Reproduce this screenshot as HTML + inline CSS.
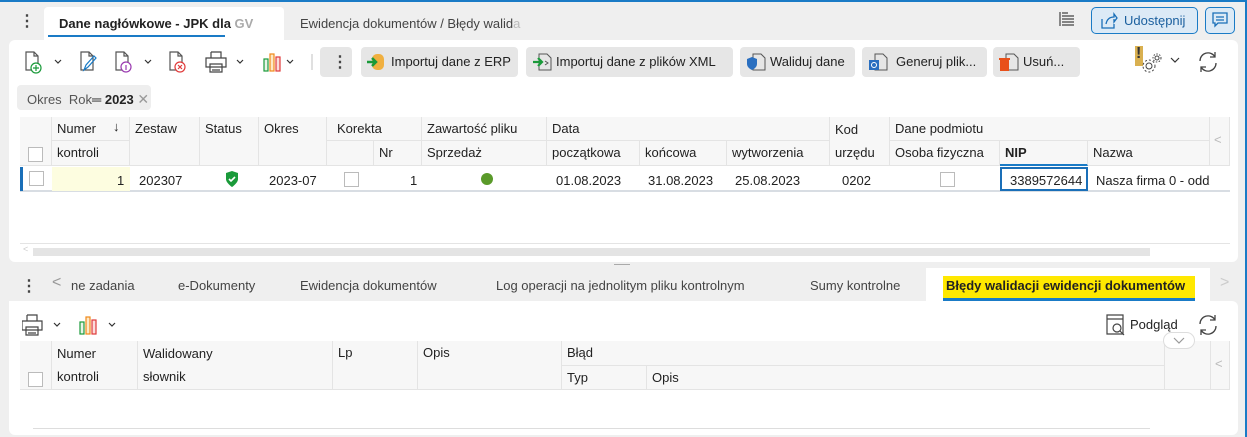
<!DOCTYPE html>
<html><head><meta charset="utf-8"><style>
*{box-sizing:border-box;margin:0;padding:0}
body{width:1247px;height:437px;overflow:hidden;background:#efefef;font-family:"Liberation Sans",sans-serif;font-size:13px;color:#222;position:relative}
.a{position:absolute}
.t{position:absolute;white-space:nowrap}
.btn{position:absolute;top:47px;height:30px;background:#e6e6e6;border-radius:4px;font-size:13px;line-height:30px;padding-left:30px;color:#222}
.hd{position:absolute;background:#f7f7f7;border-right:1px solid #e4e4e4;border-bottom:1px solid #e4e4e4;font-size:13px;padding:4px 5px;white-space:nowrap;color:#222}
.cb{position:absolute;width:15px;height:15px;border:1px solid #bbb;background:#fff}
</style></head><body>
<div class="a" style="left:0;top:0;width:1247px;height:2px;background:#1a7bc6"></div>
<div class="a" style="right:0;top:0;width:2px;height:437px;background:#1a7bc6"></div>
<div class="t" style="left:19px;top:11px;font-size:16px;font-weight:bold;color:#444">⋮</div>
<div class="a" style="left:44px;top:7px;width:240px;height:34px;background:#fff;border-radius:4px 4px 0 0"></div>
<div class="t" style="left:59px;top:16px;font-weight:bold;color:#222">Dane nagłówkowe - JPK dla <span style="color:#aaa">GV</span></div>
<div class="a" style="left:48px;top:35px;width:177px;height:2px;background:#1a7bc6"></div>
<div class="t" style="left:300px;top:16px;color:#444">Ewidencja dokumentów / Błędy walid<span style="color:#bbb">a</span></div>
<svg class="a" style="left:1058px;top:10px" width="18" height="18" viewBox="0 0 18 18" fill="none" stroke="#444" stroke-width="1.2"><path d="M2 2v14M4 3h6M4 6h12M4 9h12M4 12h12M4 15h12"/></svg>
<div class="a" style="left:1091px;top:7px;width:107px;height:27px;border:1px solid #1a7bc6;border-radius:5px;background:#dceaf6"></div>
<svg class="a" style="left:1100px;top:12px" width="18" height="18" viewBox="0 0 18 18" fill="none" stroke="#1a6fb8" stroke-width="1.3"><path d="M2 7v9h12v-4M6 12c1-5 4-7 8-7V2l3 4-3 4V7"/></svg>
<div class="t" style="left:1124px;top:13px;color:#1a5f9e">Udostępnij</div>
<div class="a" style="left:1205px;top:7px;width:30px;height:27px;border:1px solid #1a7bc6;border-radius:5px;background:#dceaf6"></div>
<svg class="a" style="left:1212px;top:12px" width="16" height="16" viewBox="0 0 16 16" fill="none" stroke="#1a6fb8" stroke-width="1.3"><path d="M1 1h14v10H6l-3 3v-3H1z M4 5h8M4 8h8"/></svg>
<div class="a" style="left:9px;top:40px;width:1229px;height:222px;background:#fff;border-radius:6px"></div>
<svg class="a" style="left:24px;top:50px" width="290" height="24" viewBox="0 0 290 24" fill="none" stroke-width="1.2">
<g stroke="#555"><path d="M2 2h8l4 4v14H2z M10 2v4h4"/></g><circle cx="12" cy="18" r="5" fill="#fff" stroke="#1a9a3a"/><path d="M12 15v6M9 18h6" stroke="#1a9a3a"/>
<path d="M31 10l3 3 3-3" stroke="#333"/>
<g stroke="#555"><path d="M57 2h8l4 4v14H57z M65 2v4h4"/></g><path d="M60 20l2-5 8-9 2 2-8 9z" stroke="#1a7bc6"/>
<g stroke="#555"><path d="M92 2h8l4 4v14H92z M100 2v4h4"/></g><circle cx="102" cy="17" r="5" fill="#fff" stroke="#9a3ab0"/><path d="M102 15v5" stroke="#9a3ab0"/>
<path d="M121 10l3 3 3-3" stroke="#333"/>
<g stroke="#555"><path d="M146 2h8l4 4v14H146z M154 2v4h4"/></g><circle cx="156" cy="17" r="5" fill="#fff" stroke="#e03a3a"/><path d="M154 15l4 4M158 15l-4 4" stroke="#e03a3a"/>
<g stroke="#444"><path d="M187 2h10v6M187 8V2 M182 8h20v9h-20z M186 14h12v8h-12z M188 17h8M188 20h8"/></g>
<path d="M213 10l3 3 3-3" stroke="#333"/>
<rect x="240" y="9" width="4" height="12" fill="#e8f4e8" stroke="#1a9a3a"/><rect x="246" y="4" width="4" height="17" fill="#fde9c8" stroke="#f08a1a"/><rect x="252" y="7" width="4" height="14" fill="#fbdcdc" stroke="#e03a3a"/>
<path d="M263 10l3 3 3-3" stroke="#333"/>
<path d="M288 4v16" stroke="#ccc"/>
</svg>
<div class="a" style="left:320px;top:47px;width:32px;height:30px;background:#e6e6e6;border-radius:4px"></div>
<div class="t" style="left:332px;top:52px;font-size:16px;font-weight:bold;color:#444">⋮</div>
<div class="btn" style="left:361px;width:157px">Importuj dane z ERP</div>
<svg class="a" style="left:366px;top:52px" width="20" height="20" viewBox="0 0 20 20"><rect x="6" y="2" width="12" height="16" rx="5" fill="#f0b040"/><path d="M1 10h8M6 6l4 4-4 4" stroke="#1a9a3a" stroke-width="2.5" fill="none"/></svg>
<div class="btn" style="left:526px;width:207px">Importuj dane z plików XML</div>
<svg class="a" style="left:532px;top:52px" width="22" height="20" viewBox="0 0 22 20" fill="none"><path d="M7 2h8l4 4v12H7z" stroke="#555"/><path d="M13 9l3 2-3 2" stroke="#555"/><path d="M1 10h8M6 6l4 4-4 4" stroke="#1a9a3a" stroke-width="2.2"/></svg>
<div class="btn" style="left:740px;width:115px">Waliduj dane</div>
<svg class="a" style="left:745px;top:52px" width="22" height="20" viewBox="0 0 22 20" fill="none"><path d="M8 2h8l4 4v12H8z" stroke="#555"/><path d="M2 7l5-2 5 2v5c0 4-5 6-5 6s-5-2-5-6z" fill="#2a6fc0"/></svg>
<div class="btn" style="left:862px;width:125px;padding-left:34px">Generuj plik...</div>
<svg class="a" style="left:867px;top:52px" width="22" height="20" viewBox="0 0 22 20" fill="none"><path d="M8 2h8l4 4v12H8z" stroke="#555"/><rect x="2" y="8" width="10" height="10" fill="#2a6fc0"/><circle cx="7" cy="13" r="2.5" stroke="#fff"/></svg>
<div class="btn" style="left:993px;width:87px">Usuń...</div>
<svg class="a" style="left:998px;top:52px" width="22" height="20" viewBox="0 0 22 20" fill="none"><path d="M8 2h8l4 4v12H8z" stroke="#555"/><rect x="2" y="8" width="9" height="11" fill="#e8501a"/><path d="M1 7h11" stroke="#e8501a" stroke-width="2"/></svg>
<div class="a" style="left:1135px;top:46px;width:8px;height:20px;background:#d9b050"></div>
<div class="t" style="left:1136px;top:45px;font-weight:bold;font-size:16px;color:#333">!</div>
<svg class="a" style="left:1140px;top:52px" width="24" height="22" viewBox="0 0 24 22" fill="none" stroke="#444"><circle cx="9" cy="14" r="3"/><circle cx="9" cy="14" r="6" stroke-dasharray="2 2"/><circle cx="17" cy="6" r="2"/><circle cx="17" cy="6" r="4" stroke-dasharray="1.5 1.5"/></svg>
<svg class="a" style="left:1170px;top:56px" width="10" height="8"><path d="M1 2l4 4 4-4" stroke="#333" fill="none" stroke-width="1.2"/></svg>
<svg class="a" style="left:1196px;top:50px" width="24" height="24" viewBox="0 0 24 24" fill="none" stroke="#444" stroke-width="1.3"><path d="M4 11a8 8 0 0 1 15-4M20 13a8 8 0 0 1-15 4M19 2v5h-5M5 22v-5h5"/></svg>
<div class="a" style="left:17px;top:85px;width:134px;height:25px;background:#eeeeee;border-radius:4px"></div>
<div class="t" style="left:27px;top:91px;color:#555">Okres&nbsp; Rok<b style="color:#222">═ 2023</b> <span style="color:#999;font-size:14px">✕</span></div>
<div class="hd" style="left:20px;top:117px;width:32px;height:49px"></div>
<div class="cb" style="left:28px;top:147px"></div>
<div class="hd" style="left:52px;top:117px;width:58px;height:24px;border-right:none">Numer</div>
<div class="hd" style="left:110px;top:117px;width:20px;height:24px;padding:2px 3px">↓</div>
<div class="hd" style="left:52px;top:141px;width:78px;height:25px">kontroli</div>
<div class="hd" style="left:130px;top:117px;width:70px;height:49px">Zestaw</div>
<div class="hd" style="left:200px;top:117px;width:59px;height:49px">Status</div>
<div class="hd" style="left:259px;top:117px;width:68px;height:49px">Okres</div>
<div class="hd" style="left:327px;top:117px;width:95px;height:24px;padding-left:10px">Korekta</div>
<div class="hd" style="left:327px;top:141px;width:47px;height:25px"></div>
<div class="hd" style="left:374px;top:141px;width:48px;height:25px">Nr</div>
<div class="hd" style="left:422px;top:117px;width:125px;height:24px">Zawartość pliku</div>
<div class="hd" style="left:422px;top:141px;width:125px;height:25px">Sprzedaż</div>
<div class="hd" style="left:547px;top:117px;width:283px;height:24px">Data</div>
<div class="hd" style="left:547px;top:141px;width:93px;height:25px">początkowa</div>
<div class="hd" style="left:640px;top:141px;width:87px;height:25px">końcowa</div>
<div class="hd" style="left:727px;top:141px;width:103px;height:25px">wytworzenia</div>
<div class="hd" style="left:830px;top:117px;width:60px;height:49px;line-height:23px;padding-top:1px">Kod<br>urzędu</div>
<div class="hd" style="left:890px;top:117px;width:320px;height:24px">Dane podmiotu</div>
<div class="hd" style="left:890px;top:141px;width:110px;height:25px">Osoba fizyczna</div>
<div class="hd" style="left:1000px;top:141px;width:88px;height:25px;font-weight:bold;border-bottom:2px solid #1a7bc6">NIP</div>
<div class="hd" style="left:1088px;top:141px;width:122px;height:25px">Nazwa</div>
<div class="hd" style="left:1210px;top:117px;width:20px;height:49px;color:#bbb;padding:15px 4px">&lt;</div>
<div class="a" style="left:20px;top:167px;width:1210px;height:25px;border-bottom:2px solid #d8dde3"></div>
<div class="a" style="left:20px;top:167px;width:3px;height:24px;background:#1a6fb8"></div>
<div class="cb" style="left:29px;top:171px"></div>
<div class="a" style="left:52px;top:167px;width:78px;height:24px;background:#fdfde0"></div>
<div class="t" style="left:117px;top:173px">1</div>
<div class="t" style="left:139px;top:173px">202307</div>
<svg class="a" style="left:224px;top:170px" width="16" height="18" viewBox="0 0 16 18"><path d="M8 1l6 2v6c0 4-6 8-6 8s-6-4-6-8V3z" fill="#1a9a3a"/><path d="M5 9l2 2 4-4" stroke="#fff" stroke-width="1.6" fill="none"/></svg>
<div class="t" style="left:269px;top:173px">2023-07</div>
<div class="cb" style="left:344px;top:172px"></div>
<div class="t" style="left:410px;top:173px">1</div>
<div class="a" style="left:481px;top:173px;width:12px;height:12px;border-radius:50%;background:#5a9a2a"></div>
<div class="t" style="left:556px;top:173px">01.08.2023</div>
<div class="t" style="left:648px;top:173px">31.08.2023</div>
<div class="t" style="left:735px;top:173px">25.08.2023</div>
<div class="t" style="left:842px;top:173px">0202</div>
<div class="cb" style="left:940px;top:172px"></div>
<div class="a" style="left:1000px;top:167px;width:88px;height:24px;border:2px solid #1a6fb8;background:#fff;overflow:hidden"><span class="t" style="left:8px;top:4px">3389572644</span></div>
<div class="t" style="left:1096px;top:173px;width:114px;overflow:hidden">Nasza firma 0 - oddział</div>
<div class="a" style="left:20px;top:243px;width:1210px;height:1px;background:#e4e4e4"></div>
<div class="t" style="left:23px;top:244px;font-size:9px;color:#ccc">&lt;</div>
<div class="a" style="left:33px;top:248px;width:1117px;height:8px;background:#e4e4e4"></div>
<div class="a" style="left:614px;top:264px;width:16px;height:1px;background:#aaa"></div>
<div class="t" style="left:21px;top:276px;font-size:16px;font-weight:bold;color:#444">⋮</div>
<div class="t" style="left:52px;top:274px;font-size:16px;color:#999">&lt;</div>
<div class="t" style="left:71px;top:278px;color:#444">ne zadania</div>
<div class="t" style="left:178px;top:278px;color:#444">e-Dokumenty</div>
<div class="t" style="left:300px;top:278px;color:#444">Ewidencja dokumentów</div>
<div class="t" style="left:496px;top:278px;color:#444">Log operacji na jednolitym pliku kontrolnym</div>
<div class="t" style="left:810px;top:278px;color:#444">Sumy kontrolne</div>
<div class="a" style="left:926px;top:268px;width:284px;height:34px;background:#fff"></div>
<div class="a" style="left:943px;top:276px;width:252px;height:22px;background:#ffe800"></div>
<div class="t" style="left:946px;top:278px;font-weight:bold;color:#222">Błędy walidacji ewidencji dokumentów</div>
<div class="a" style="left:943px;top:298px;width:252px;height:3px;background:#1a7bc6"></div>
<div class="t" style="left:1220px;top:274px;font-size:16px;color:#ccc">&gt;</div>
<div class="a" style="left:9px;top:301px;width:1229px;height:134px;background:#fff;border-radius:0 6px 6px 6px"></div>
<svg class="a" style="left:22px;top:313px" width="100" height="24" viewBox="0 0 100 24" fill="none" stroke-width="1.2">
<g stroke="#444"><path d="M5 2h10v6M5 8V2 M0 8h20v9H0z M4 14h12v8H4z M6 17h8M6 20h8"/></g>
<path d="M32 10l3 3 3-3" stroke="#333"/>
<rect x="58" y="9" width="4" height="12" fill="#e8f4e8" stroke="#1a9a3a"/><rect x="64" y="4" width="4" height="17" fill="#fde9c8" stroke="#f08a1a"/><rect x="70" y="7" width="4" height="14" fill="#fbdcdc" stroke="#e03a3a"/>
<path d="M87 10l3 3 3-3" stroke="#333"/>
</svg>
<svg class="a" style="left:1106px;top:314px" width="22" height="22" viewBox="0 0 22 22" fill="none" stroke="#444" stroke-width="1.2"><path d="M1 1h16v19H1zM1 5h16"/><circle cx="11" cy="14" r="4" fill="#fff"/><path d="M14 17l4 4"/></svg>
<div class="t" style="left:1130px;top:317px;color:#222">Podgląd</div>
<svg class="a" style="left:1196px;top:313px" width="24" height="24" viewBox="0 0 24 24" fill="none" stroke="#444" stroke-width="1.3"><path d="M4 11a8 8 0 0 1 15-4M20 13a8 8 0 0 1-15 4M19 2v5h-5M5 22v-5h5"/></svg>
<div class="hd" style="left:20px;top:341px;width:32px;height:49px"></div>
<div class="cb" style="left:28px;top:372px"></div>
<div class="hd" style="left:52px;top:341px;width:86px;height:49px;line-height:23px;padding-top:1px">Numer<br>kontroli</div>
<div class="hd" style="left:138px;top:341px;width:195px;height:49px;line-height:23px;padding-top:1px">Walidowany<br>słownik</div>
<div class="hd" style="left:333px;top:341px;width:85px;height:49px">Lp</div>
<div class="hd" style="left:418px;top:341px;width:144px;height:49px">Opis</div>
<div class="hd" style="left:562px;top:341px;width:603px;height:25px">Błąd</div>
<div class="hd" style="left:562px;top:366px;width:85px;height:24px">Typ</div>
<div class="hd" style="left:647px;top:366px;width:518px;height:24px">Opis</div>
<div class="hd" style="left:1165px;top:341px;width:46px;height:49px"></div>
<div class="hd" style="left:1211px;top:341px;width:19px;height:49px;color:#bbb;padding:15px 4px">&lt;</div>
<div class="a" style="left:1163px;top:332px;width:32px;height:17px;border:1px solid #ddd;border-radius:9px;background:#fff"></div>
<svg class="a" style="left:1173px;top:337px" width="12" height="8"><path d="M1 1l5 5 5-5" stroke="#999" fill="none" stroke-width="1.2"/></svg>
<div class="a" style="left:33px;top:428px;width:1117px;height:1px;background:#ddd"></div>
</body></html>
